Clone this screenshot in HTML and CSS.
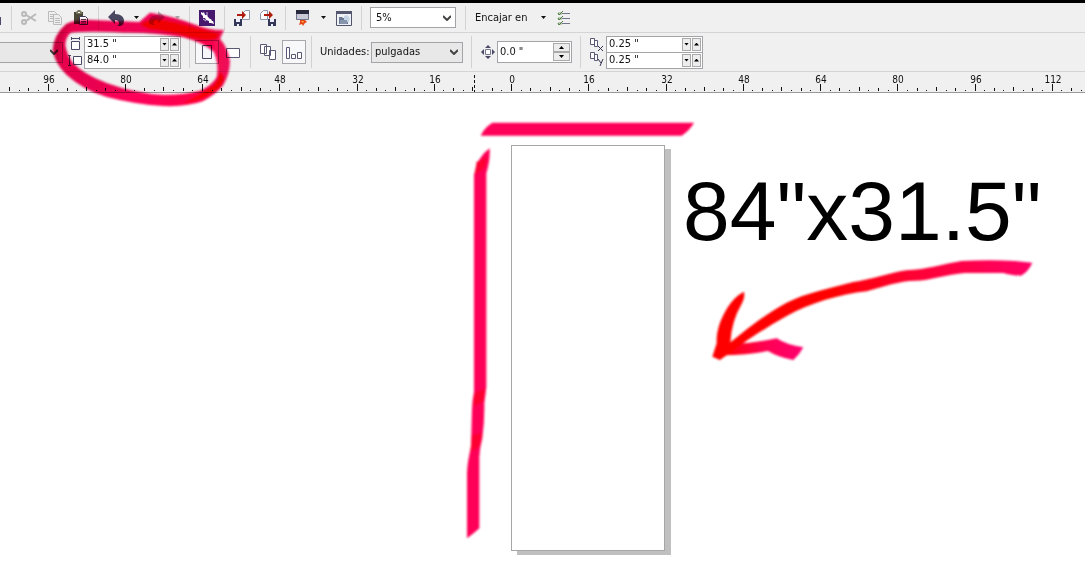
FILE: index.html
```html
<!DOCTYPE html>
<html lang="es">
<head>
<meta charset="utf-8">
<title>84"x31.5"</title>
<link rel="stylesheet" href="styles.css">
</head>
<body>
<header class="bars">
  <div class="toolbar standard">
    <div class="group first"><svg class="stub" width="2" height="16"><path d="M0 7h1v8H0z" fill="#4b4a6b"/></svg></div>
    <div class="group">
      <button class="tool" aria-label="Cortar"><svg width="16" height="16" fill="none" stroke="#b9b9b9" stroke-width="2"><path d="M5 5L15 11M5 11L15 4"/><circle cx="3" cy="4" r="2"/><circle cx="3" cy="12" r="2"/></svg></button>
      <button class="tool" aria-label="Copiar"><svg width="16" height="16" fill="#eee" stroke="#bbb"><path d="M1.500 1.500h6l2 2v8h-8zM3 4.500h4M3 6.500h3M3 8.500h3"/><path d="M6.500 4.500h5l3 3v7h-8zM8 8.500h5M8 10.500h5M8 12.500h5"/></svg></button>
      <button class="tool" aria-label="Pegar"><svg width="16" height="16"><path d="M1 2h9v12H1z" fill="#494735"/><path d="M3 4V2l2-2h2l2 2v2z" fill="#77745e"/><path d="M5 2h2v1H5z" fill="#fff"/><path d="M6.500 6.500h6l2 2v6h-8z" fill="#fff" stroke="#3a3855"/><path d="M8 9.500h5M8 11.500h5M8 13h5" stroke="#54516b"/></svg></button>
    </div>
    <div class="group">
      <button class="tool" aria-label="Deshacer"><svg width="16" height="16"><path d="M0 7L7 0v4c6 0 9 3 9 7 0 3-2 5-5 5H9c3-1 3-6-2-6v4z" fill="#494860"/></svg></button>
      <button class="drop" aria-label="Lista deshacer"></button>
      <button class="tool" aria-label="Rehacer"><svg width="16" height="16"><path d="M16 7L9 1v4C3 5 0 8 0 11c0 3 2 4 5 4h1c-3-1-2-5 3-5v3z" fill="#b5b5b5"/></svg></button>
      <button class="drop off" aria-label="Lista rehacer"></button>
    </div>
    <div class="group">
      <button class="tool" aria-label="Conectar"><svg width="16" height="16"><path d="M0 0h16v16H0z" fill="#46196f"/><path d="M2 2l2 1 1-1 1 3 2 0 1 2 2 2 1 0 1 2 1 0 1 3-3-1-2 0 0-2-3-1-1-2-2 0 0-2-2-2z" fill="#fff"/><path d="M8 2v4M4 9l3 2" stroke="#cbbdd8"/></svg></button>
    </div>
    <div class="group">
      <button class="tool" aria-label="Importar"><svg width="16" height="16"><path d="M8.500 3.500l3-3h4v9h-7z" fill="#fff" stroke="#8c98ab"/><path d="M3 4h5V1l4 4-4 4V6H3z" fill="#ad1c0c"/><path d="M0 9h8v7H0z" fill="#343758"/><path d="M2 9h4v3H2zM3 14h2v2H3z" fill="#eef"/></svg></button>
      <button class="tool" aria-label="Exportar"><svg width="16" height="16"><path d="M.500 3.500l3-3h4v9h-7z" fill="#fff" stroke="#8c98ab"/><path d="M4 4h5V1l4 4-4 4V6H4z" fill="#ad1c0c"/><path d="M8 9h8v7H8z" fill="#343758"/><path d="M10 9h4v3h-4zM11 14h2v2h-2z" fill="#eef"/></svg></button>
    </div>
    <div class="group">
      <button class="tool" aria-label="Iniciador"><svg width="16" height="16"><path d="M1.500.500h12v9h-12z" fill="#c8cad6" stroke="#70718a"/><path d="M1 0h13v4H1z" fill="#29293d"/><path d="M5 10h5l2 2-2 1-2 3-1-2-3 1 1-3z" fill="#e64318"/><path d="M6 11h3l-1 2z" fill="#ffb13b"/></svg></button>
      <button class="drop" aria-label="Lista iniciador"></button>
      <button class="tool" aria-label="Bienvenida"><svg width="16" height="16"><path d="M.500 1.500h15v14H.500z" fill="#eef1f6" stroke="#53536c"/><path d="M0 1h16v3H0z" fill="#55566f"/><path d="M3 7h3l1 1h5v6H3z" fill="#6b7891"/><path d="M8 6l3-1 3 3-1 4H8z" fill="#c5d4e4"/><path d="M4 10h7v4H4z" fill="#8795ac"/></svg></button>
    </div>
    <div class="group zooms">
      <div class="combo zoom"><select aria-label="Zoom"><option>5%</option></select><svg class="chevron" width="8" height="6"><path d="M0 1l4 4 4-4" fill="none" stroke="#444" stroke-width="2"/></svg></div>
    </div>
    <div class="group">
      <button class="snap">Encajar en</button>
      <button class="drop" aria-label="Lista encajar"></button>
      <button class="tool" aria-label="Opciones"><svg width="16" height="16"><path d="M6 3.500h8M6 8.500h8M6 13.500h8" stroke="#74748a"/><path d="M2 2h4v3H2zM2 7h4v3H2zM2 12h4v3H2z" fill="#bccbb6"/><path d="M2 3l1 2 4-4M2 8l1 2 4-4M2 13l1 2 4-4" fill="none" stroke="#4c7d3e"/></svg></button>
    </div>
  </div>

  <div class="toolbar property">
    <div class="combo gray paper"><select aria-label="Tamaño de papel"><option></option></select><svg class="chevron" width="8" height="6"><path d="M0 1l4 4 4-4" fill="none" stroke="#444" stroke-width="2"/></svg></div>
    <div class="pair">
      <div class="icons">
        <svg width="14" height="14" fill="none" stroke="#4a4966"><path d="M3.500 4.500h8v8h-8z" fill="#fff"/><path d="M3.500 0v3M11.500 0v3M4 1.500h7"/></svg>
        <svg width="14" height="14" fill="none" stroke="#4a4966"><path d="M5.500 3.500h8v8h-8z" fill="#fff"/><path d="M0 2.500h3M0 12.500h3M1.500 3v9"/></svg>
      </div>
      <div class="fields">
        <div class="field"><input aria-label="Ancho" value='31.5 "'><button class="step down" aria-label="Menos ancho"></button><button class="step up" aria-label="Más ancho"></button></div>
        <div class="field"><input aria-label="Alto" value='84.0 "'><button class="step down" aria-label="Menos alto"></button><button class="step up" aria-label="Más alto"></button></div>
      </div>
    </div>
    <div class="group orient">
      <button class="tool toggle" aria-label="Vertical"><svg width="16" height="16"><path d="M3.500 1.500h9v13h-9z" fill="#f5f5fa" stroke="#4a4966"/></svg></button>
      <button class="tool flat" aria-label="Horizontal"><svg width="16" height="16"><path d="M1.500 4.500h13v9h-13z" fill="#fff" stroke="#5a5975"/></svg></button>
    </div>
    <div class="group pages">
      <button class="tool flat" aria-label="Todas las páginas"><svg width="16" height="16" fill="#fff" stroke="#5a5975"><path d="M.500.500h6v9h-6zM4.500 2.500h6v9h-6zM9.500 6.500h6v9h-6z"/></svg></button>
      <button class="tool toggle" aria-label="Página actual"><svg width="16" height="16" fill="#fff" stroke="#5a5975"><path d="M.500 3.500h3v11h-3zM5.500 10.500h4v4h-4zM11.500 8.500h4v6h-4z"/></svg></button>
    </div>
    <div class="group units">
      <label for="units">Unidades:</label>
      <div class="combo gray unit"><select id="units"><option>pulgadas</option></select><svg class="chevron" width="8" height="6"><path d="M0 1l4 4 4-4" fill="none" stroke="#444" stroke-width="2"/></svg></div>
    </div>
    <div class="group nudge">
      <svg width="14" height="14"><path d="M7 0l3 3H4zM7 14l3-3H4zM0 7l3-3v6zM14 7l-3-3v6z" fill="#4a4966"/><path d="M4.500 4.500h5v5h-5z" fill="#fff" stroke="#77778c"/></svg>
      <div class="field single"><input aria-label="Desplazamiento" value='0.0 "'><div class="stack"><button class="step up" aria-label="Más desplazamiento"></button><button class="step down" aria-label="Menos desplazamiento"></button></div></div>
    </div>
    <div class="group duplicate">
      <div class="icons">
        <svg width="14" height="14" fill="#fff" stroke="#5a5975"><path d="M.500.500h4v6h-4zM4.500 2.500h3v6h-3z"/><path d="M8 8l5 5M13 8l-5 5" stroke="#33334d"/></svg>
        <svg width="14" height="14" fill="#fff" stroke="#5a5975"><path d="M.500.500h4v6h-4zM4.500 2.500h3v6h-3z"/><path d="M8 7l3 4M13 7l-3 7" stroke="#33334d"/></svg>
      </div>
      <div class="fields">
        <div class="field"><input aria-label="Distancia X" value='0.25 "'><button class="step down" aria-label="Menos X"></button><button class="step up" aria-label="Más X"></button></div>
        <div class="field"><input aria-label="Distancia Y" value='0.25 "'><button class="step down" aria-label="Menos Y"></button><button class="step up" aria-label="Más Y"></button></div>
      </div>
    </div>
  </div>
  <svg class="ruler" id="ruler" height="20"></svg>
</header>

<main class="canvas">
  <div class="sheet"></div>
  <p class="size">84"x31.5"</p>
</main>

<svg class="ink" width="1085" height="579" aria-hidden="true">
  <defs>
    <linearGradient id="ring"><stop offset="0" stop-color="#f4004f"/><stop offset=".5" stop-color="#ff005a"/><stop offset=".85" stop-color="#ff0048"/><stop offset="1" stop-color="#ff1060"/></linearGradient>
    <linearGradient id="tail"><stop offset="0" stop-color="#f00"/><stop offset=".35" stop-color="#f00"/><stop offset=".65" stop-color="#ff0038"/><stop offset="1" stop-color="#ff0066"/></linearGradient>
    <linearGradient id="barb"><stop offset="0" stop-color="#f00"/><stop offset=".5" stop-color="#ff0050"/><stop offset="1" stop-color="#ff0070"/></linearGradient>
    <filter id="soft" x="-5%" y="-5%" width="110%" height="110%"><feGaussianBlur stdDeviation="3"/></filter>
  </defs>
  <g transform="translate(40 0) scale(.33333)" filter="url(#soft)">
    <path fill="url(#ring)" fill-rule="evenodd" d="M298 66L330 38Q400 48 470 76Q510 92 552 90L540 116Q565 145 570 185Q569 225 548 258Q525 285 488 304Q440 321 370 318Q290 314 200 291Q130 270 80 225Q45 192 38 150Q40 105 78 72Q100 60 140 59ZM92 98Q76 112 76 135Q79 160 98 188Q130 222 200 249Q290 282 370 284Q430 285 480 272Q515 258 530 232Q538 195 522 156Q490 128 430 112Q350 97 250 98Q150 93 92 98Z"/>
    <path fill="#f00" d="M298 72L340 54Q410 65 470 84L540 100L530 116Q500 125 448 112Q390 95 325 88ZM430 310Q480 285 520 256Q535 240 540 215Q562 228 545 256Q510 297 430 310Z"/>
    <path fill="#c30038" fill-opacity=".45" d="M42 135Q47 105 78 75L100 68Q75 88 68 112Q55 145 60 190Q43 165 42 135Z"/>
  </g>
  <g transform="translate(460 110) scale(.33333)" filter="url(#soft)" fill="#ff0059">
    <path d="M62 77Q72 54 97 38H702Q690 60 665 77Z"/>
    <path d="M89 115Q91 150 79 190V830Q77 850 73 880Q74 930 67 985Q59 1015 58 1040V1255Q42 1270 21 1285V1090Q22 1055 33 1012L36 900Q37 870 42 845V195Q52 140 89 115Z"/>
    <path fill="#ff0030" d="M50 155L84 140L72 175L44 194ZM43 850L76 835L70 875L39 890ZM36 975L66 970L58 1010L31 1025Z"/>
  </g>
  <g transform="translate(670 160) scale(.33333)" filter="url(#soft)">
    <path fill="url(#barb)" d="M155 555Q240 552 320 535Q350 555 400 562Q388 585 370 600Q325 592 294 573Q230 585 158 586Z"/>
    <path fill="url(#tail)" d="M145 600L175 552C240 500 290 460 350 428C410 398 480 385 550 366C600 360 660 338 710 331C770 328 820 312 875 303Q960 299 1035 303L1087 308Q1075 335 1053 347Q1020 346 1000 339H885C830 343 780 362 735 362C690 362 640 380 590 394C510 402 420 430 350 468C290 502 230 540 175 583Z"/>
    <path fill="#f00" d="M222 395Q226 410 216 430Q184 485 181 548L190 570L150 600L127 590L140 550Q138 520 151 485Q180 415 222 395Z"/>
  </g>
</svg>
<script src="script.js"></script>
</body>
</html>
```
FILE: styles.css
```css
* { box-sizing: border-box; }
body {
  margin: 0;
  min-height: 100vh;
  display: flex;
  flex-direction: column;
  position: relative;
  overflow: hidden;
  background: #fff;
  color: #111;
  font: 11px/14px "DejaVu Sans Condensed", "Noto Sans", sans-serif;
}
button, input, select { font: inherit; color: inherit; margin: 0; padding: 0; border: 0; background: none; }
svg { display: block; flex: none; }

.bars { background: #f0f0f0; border-top: 3px solid #000; border-bottom: 1px solid #999; }
.toolbar { display: flex; align-items: center; border-bottom: 1px solid #d4d4d4; }
.standard { height: 30px; }
.property { height: 39px; }

.group { display: flex; align-items: center; gap: 10px; height: 24px; padding: 0 9px; border-left: 1px solid #d2d2d2; }
.property .group { height: 32px; }
.first { width: 11px; padding: 0; border-left: 0; }
.tool { display: flex; align-items: center; justify-content: center; width: 16px; height: 16px; flex: none; }
.drop { width: 5px; height: 3px; flex: none; background: #111; clip-path: polygon(0 0, 100% 0, 50% 100%); }
.off { background: #aaa; }
.snap { width: 56px; text-align: left; white-space: nowrap; }

.combo { display: flex; align-items: center; height: 21px; position: relative; border: 1px solid #a4a4a8; background: #fff; }
.gray { background: #e8e8e8; }
.combo select { appearance: none; width: 100%; height: 100%; padding-left: 5px; }
.unit select { padding-left: 3px; }
.chevron { position: absolute; right: 4px; pointer-events: none; }
.zooms { padding-left: 8px; }
.zoom { width: 86px; }
.paper { width: 63px; border-left: 0; }
.unit { width: 92px; }

.pair { display: flex; gap: 2px; padding: 0 8px 0 5px; }
.icons { display: flex; flex-direction: column; justify-content: space-around; }
.fields { width: 97px; border: 1px solid #a4a4a8; background: #fff; }
.field { display: flex; align-items: center; gap: 1px; height: 15px; padding-right: 1px; }
.field + .field { height: 16px; border-top: 1px solid #a4a4a8; }
.field input { flex: 1; min-width: 0; height: 14px; padding-left: 2px; }
.step { display: flex; align-items: center; justify-content: center; width: 9px; height: 13px; flex: none; border: 1px solid #aaa; background: #ededed; }
.step::before { content: ""; width: 5px; height: 3px; background: #000; }
.down::before { clip-path: polygon(0 0, 100% 0, 50% 100%); }
.up::before { clip-path: polygon(50% 0, 100% 100%, 0 100%); }
.single { width: 75px; height: 22px; border: 1px solid #a4a4a8; background: #fff; }
.stack { display: flex; flex-direction: column; }
.stack .step { width: 17px; height: 9px; }

.property .orient { gap: 4px; padding: 0 7px 0 5px; }
.property .pages { gap: 4px; padding: 0 5px 0 7px; }
.toggle { width: 24px; height: 24px; border: 1px solid #a8a8ac; background: #f8f8fb; }
.flat { width: 20px; height: 24px; }
.property .units { gap: 1px; padding: 0 8px; }
.units label { width: 50px; white-space: nowrap; }
.property .nudge { gap: 2px; padding: 0 8px 0 9px; }
.property .duplicate { gap: 2px; padding: 0 9px; }

.ruler { width: 100%; font-size: 10px; }

.canvas { flex: 1; position: relative; }
.sheet { position: absolute; left: 511px; top: 52px; width: 154px; height: 406px; border: 1px solid #a6a6a6; background: #fff; box-shadow: 6px 4px 0 #c0c0c0; }
.size { position: absolute; left: 683px; top: 70px; margin: 0; color: #000; font: 84px/96px "Liberation Sans", Arial, sans-serif; white-space: nowrap; }

.ink { position: absolute; left: 0; top: 0; pointer-events: none; mix-blend-mode: multiply; }
```
FILE: script.js
```js
const ruler = document.getElementById("ruler");
const origin = 511;
const major = 77.25;
let marks = "";
for (let i = -52; i <= 59; i++) {
  const x = Math.round(origin + i * major / 8);
  const n = Math.abs(i) % 8;
  const h = n === 0 ? 7 : n === 4 ? 4 : n % 2 ? 1 : 3;
  const y = n === 0 ? 12 : 19 - h;
  marks += `<rect x="${x}" y="${y}" width="1" height="${h}" fill="#111"/>`;
  if (n === 0) {
    marks += `<text x="${x + 1}" y="11" text-anchor="middle" fill="#111">${Math.abs(i) * 2}</text>`;
  }
}
marks += '<path d="M474.5 3V20" stroke="#111" stroke-dasharray="3 2"/>';
ruler.innerHTML = marks;
```
